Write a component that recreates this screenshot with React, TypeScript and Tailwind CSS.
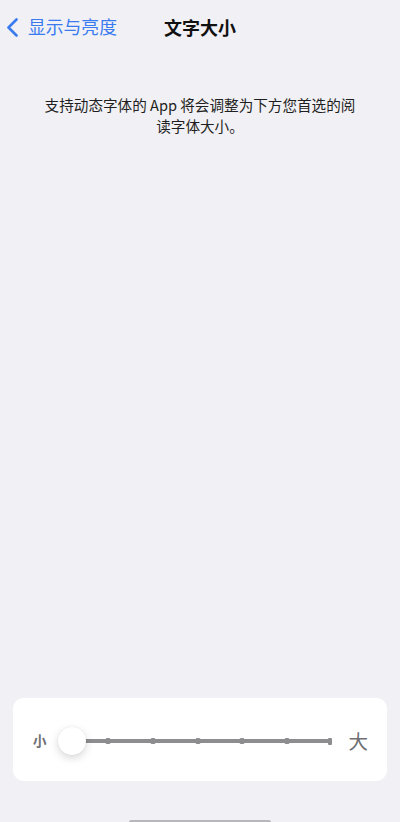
import React from "react";

const font = { fontFamily: '"Noto Sans CJK SC", "Noto Sans", sans-serif' };

// tick offsets along the track, thumb sits at step 0
const ticks = [50, 95, 140, 184, 229, 274];

const SizeSlider: React.FC = () => {
  return (
    <div className="mx-[13px] flex h-[83px] items-center rounded-[11px] bg-white pl-[20px] pr-[19px] pt-[3px]">
      <span className="w-[13px] text-[13.5px] font-bold leading-none text-[#707074]">小</span>

      <div className="relative ml-[12px] h-[28px] w-[274px]">
        {/* track line */}
        <div className="absolute left-[14px] right-0 top-[12px] h-[4px] bg-[#8d8d8f]" />
        {ticks.map((x, i) => (
          <div
            key={x}
            className={
              i === ticks.length - 1
                ? "absolute top-[10.5px] h-[7px] w-[4px] -translate-x-full rounded-[1px] bg-[#8d8d8f]"
                : "absolute top-[11px] h-[6px] w-[5px] -translate-x-1/2 rounded-[1.5px] bg-[#8d8d8f]"
            }
            style={{ left: x }}
          />
        ))}
        {/* thumb */}
        <div className="absolute left-0 top-0 h-[28px] w-[28px] rounded-full bg-white shadow-[0_3px_8px_rgba(0,0,0,0.16),0_0_0_0.5px_rgba(0,0,0,0.05)]" />
      </div>

      <span className="ml-[17px] text-[19.5px] leading-none text-[#6e6e73]">大</span>
    </div>
  );
};

export default function App() {
  return (
    <div className="flex h-[822px] w-[400px] flex-col bg-[#f1f0f5]" style={font}>
      {/* nav bar */}
      <div className="relative flex h-[54px] items-center">
        <button className="flex items-center pl-[6px] text-[#3a7cf0]">
          <svg width="12" height="19" viewBox="0 0 12 19" fill="none">
            <path
              d="M10.5 1.5 L2.5 9.5 L10.5 17.5"
              stroke="currentColor"
              strokeWidth="2.6"
              strokeLinecap="round"
              strokeLinejoin="round"
            />
          </svg>
          <span className="ml-[10px] text-[17.8px] leading-none">显示与亮度</span>
        </button>
        <h1 className="absolute left-1/2 top-1/2 -translate-x-1/2 -translate-y-1/2 text-[18px] font-bold leading-none text-[#111]">
          文字大小
        </h1>
      </div>

      {/* description */}
      <p className="mx-auto mt-[40px] w-[320px] text-center text-[14.6px] leading-[21px] text-[#1f1f21]">
        支持动态字体的 App 将会调整为下方您首选的阅读字体大小。
      </p>

      <div className="flex-1" />

      <SizeSlider />

      {/* home indicator */}
      <div className="flex h-[41px] items-end justify-center">
        <div className="h-[2px] w-[142px] rounded-t-full bg-[#b8b8bc]" />
      </div>
    </div>
  );
}
